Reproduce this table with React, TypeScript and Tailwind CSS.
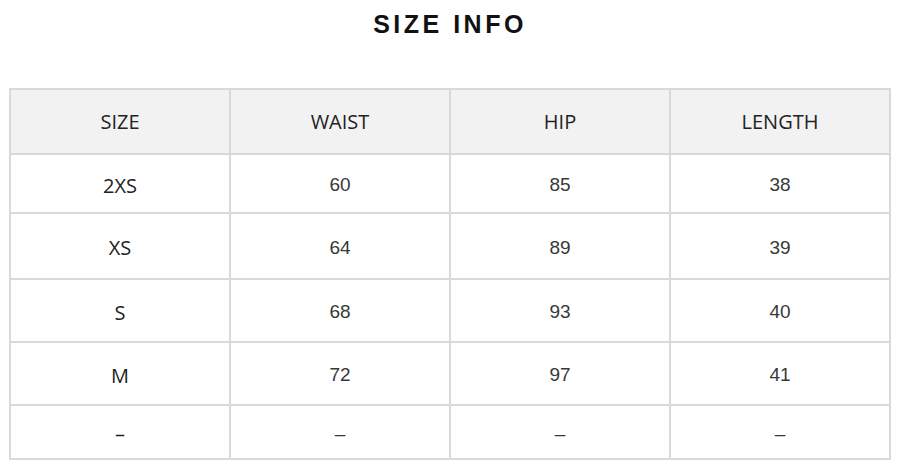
import * as React from 'react';

const headers = ['SIZE', 'WAIST', 'HIP', 'LENGTH'];

const rows = [
  { size: '2XS', waist: '60', hip: '85', length: '38', h: 'h-[59px]' },
  { size: 'XS', waist: '64', hip: '89', length: '39', h: 'h-[66px]' },
  { size: 'S', waist: '68', hip: '93', length: '40', h: 'h-[63px]' },
  { size: 'M', waist: '72', hip: '97', length: '41', h: 'h-[63px]' },
  { size: '–', waist: '–', hip: '–', length: '–', h: 'h-[54px]' },
];

const App = () => {
  return (
    <div className="w-[900px] h-[467px] bg-white overflow-hidden">
      {/* Title */}
      <div className="h-[88px] pt-[8px] text-center">
        <h1 className="font-['Liberation_Sans',Arial,sans-serif] font-bold text-[25px] leading-[32px] tracking-[3.5px] text-[#111]">
          SIZE INFO
        </h1>
      </div>

      {/* Size table */}
      <table className="ml-[9px] w-[882px] table-fixed border-collapse">
        <thead>
          <tr className="h-[65px] bg-[#f3f2f2]">
            {headers.map((h) => (
              <th
                key={h}
                className="border-2 border-[#d9d9d9] font-['Open_Sans','Noto_Sans',sans-serif] font-normal text-[20px] text-[#222] text-center align-middle"
              >
                {h}
              </th>
            ))}
          </tr>
        </thead>
        <tbody>
          {rows.map((r, i) => (
            <tr key={i} className={r.h}>
              <td className="border-2 border-[#d9d9d9] text-center align-middle pt-[4px] font-['Open_Sans','Noto_Sans',sans-serif] text-[20px] text-[#222]">
                {r.size}
              </td>
              <td className="border-2 border-[#d9d9d9] text-center align-middle pt-[4px] font-['Liberation_Sans',Arial,sans-serif] text-[19px] text-[#383838]">
                {r.waist}
              </td>
              <td className="border-2 border-[#d9d9d9] text-center align-middle pt-[4px] font-['Liberation_Sans',Arial,sans-serif] text-[19px] text-[#383838]">
                {r.hip}
              </td>
              <td className="border-2 border-[#d9d9d9] text-center align-middle pt-[4px] font-['Liberation_Sans',Arial,sans-serif] text-[19px] text-[#383838]">
                {r.length}
              </td>
            </tr>
          ))}
        </tbody>
      </table>
    </div>
  );
};

export default App;
